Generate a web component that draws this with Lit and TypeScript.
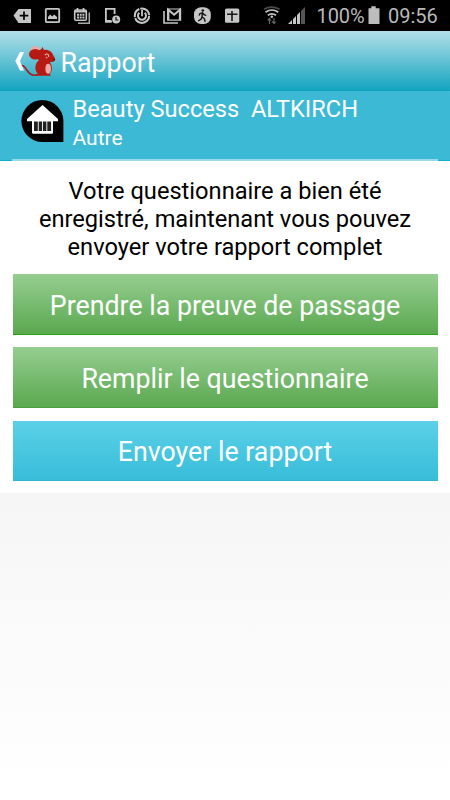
import { LitElement, html, css, svg } from "lit";
import { customElement, property } from "lit/decorators.js";

const notificationIcons = [
  svg`<path d="M6.5 15.5 11.5 9H24v14H11.5Z" fill="#c6c6c6"/><path d="M17 11.5v8.5M12.7 15.7h8.6" stroke="#000" stroke-width="1.7"/>`,
  svg`<rect x="8.8" y="8.8" width="13.4" height="13.4" rx="1" fill="none" stroke="#c6c6c6" stroke-width="1.8"/><path d="M11 19v-2l2.2-2.5 2 2 2-2L20 17v2Z" fill="#c6c6c6"/>`,
  svg`<rect x="7.7" y="10" width="11.6" height="10.3" rx="1.3" fill="none" stroke="#c6c6c6" stroke-width="1.6"/><path d="M8 11.5h11M10.5 8v3M16.5 8v3" stroke="#c6c6c6" stroke-width="1.8"/><path d="M10 14.8h7.5M10 17.5h7.5" stroke="#c6c6c6" stroke-width="2" stroke-dasharray="2 .7"/><path d="M22.3 12.5v10.7H11" fill="none" stroke="#a8a8a8" stroke-width="1.5"/>`,
  svg`<path d="M17.6 14V8.8H8.9V21.5H15" fill="none" stroke="#c6c6c6" stroke-width="1.8"/><path d="M8 20h6v2.5H8Z" fill="#c6c6c6"/><circle cx="19.2" cy="19.6" r="4" fill="#c6c6c6"/><path d="M19 17v3h2.3" fill="none" stroke="#111" stroke-width="1.2"/>`,
  svg`<circle cx="15" cy="15.7" r="7.2" fill="none" stroke="#c6c6c6" stroke-width="2" stroke-dasharray="20 1 10 1 12.2 1"/><path d="M12.3 12.7a4 4 0 1 0 5.4 0" fill="none" stroke="#c6c6c6" stroke-width="2"/><path d="M15 10v6.3" stroke="#c6c6c6" stroke-width="1.8"/>`,
  svg`<path d="M7 11v12h14" fill="none" stroke="#c6c6c6" stroke-width="1.6"/><path d="M10.6 20.2V9H23.6v11.2Z" fill="none" stroke="#c6c6c6" stroke-width="1.2"/><path d="M11.3 20V9.7l5.8 5 5.8-5V20" fill="none" stroke="#c6c6c6" stroke-width="2.1"/>`,
  svg`<rect x="7" y="7.2" width="16.8" height="16.8" rx="7" fill="#c6c6c6"/><circle cx="15.8" cy="10.5" r="1.3" fill="#111"/><path d="M15.5 12.5 15 16.8l2.4 2 .8 3M15 16.8l-.8 2.2-3 2M12 15.5l1-2 2.5-.8 1.8 2.1 2 .6" fill="none" stroke="#111" stroke-width="1.4"/>`,
  svg`<rect x="8" y="8.5" width="14.3" height="14.3" rx="1.6" fill="#c6c6c6"/><path d="M15 11v10M10 14.3h10.5" stroke="#161616" stroke-width="1.6"/>`,
];

@customElement("status-bar")
export class StatusBar extends LitElement {
  static styles = css`
    :host {
      display: flex;
      height: 31px;
      padding-left: 7px;
      background: #000;
      color: #b9b9b9;
      font: 20px/33px Roboto, sans-serif;
    }
    svg { display: block; flex: none; }
    .radio { margin-left: 14px; }
    .level { width: 49px; margin-left: 7.5px; letter-spacing: -0.1px; white-space: nowrap; }
    .battery { margin-left: 2.5px; }
    .clock { margin-left: 8px; }
  `;

  render() {
    return html`
      ${notificationIcons.map(
        (icon) => html`<svg width="30" height="31" viewBox="0 0 30 31">${icon}</svg>`
      )}
      <svg class="radio" width="48" height="31" viewBox="261 0 48 31">
        <g fill="none" stroke-width="1.7">
          <path d="M264 9.3q7.500-4.500 15.500 0" stroke="#4b4b4b" />
          <path d="M265.500 12.300q6.300-4.600 12.800 0M267.800 15.300q4-3 8.200 0" stroke="#c6c6c6" />
          <path d="M269.500 24v-5.500m-1.700 2 1.700-2 1.500 2M274 18v5.500m-1.700-2 1.700 2 1.600-2" stroke="#666" stroke-width="1.200" />
        </g>
        <circle cx="271.800" cy="16.800" r="1.300" fill="#c6c6c6" />
        <path d="M288 24l4-4v4Z M293 19l3-3v8h-3Z M297 15l3-3v12h-3Z" fill="#c6c6c6" />
        <path d="M301 11l4-4v17h-4Z" fill="#555" />
      </svg>
      <span class="level">100%</span>
      <svg class="battery" width="12" height="31" viewBox="0 0 12 31">
        <path d="M.5 8.200h2.800V6.200h4.400v2H11.500V24H.5Z" fill="#bdbdbd" />
      </svg>
      <span class="clock">09:56</span>
    `;
  }
}

@customElement("action-button")
export class ActionButton extends LitElement {
  @property() label = "";
  @property({ reflect: true }) tone = "green";

  static styles = css`
    :host { display: block; }
    .button {
      display: block;
      box-sizing: border-box;
      width: 100%;
      height: 61px;
      padding: 4px 0 0;
      border: 0;
      border-bottom: 1px solid #4a9f41;
      background: linear-gradient(#95ce90, #5ba850);
      color: #fff;
      font: 26.75px/30px Roboto, sans-serif;
      text-align: center;
    }
    :host([tone="bright"]) .button { border-bottom-color: #25a510; }
    :host([tone="blue"]) .button {
      height: 60px;
      border-bottom-color: #30b4d4;
      background: linear-gradient(#5bd0e8, #38bdd9);
    }
  `;

  render() {
    return html`<button class="button">${this.label}</button>`;
  }
}

@customElement("app-root")
export class AppRoot extends LitElement {
  static styles = css`
    :host {
      display: flex;
      flex-direction: column;
      height: 800px;
      background: linear-gradient(#f6f6f6 493px, #fff 790px);
      font-family: Roboto, sans-serif;
      overflow: hidden;
    }
    .title-bar {
      display: flex;
      height: 60px;
      background: linear-gradient(#b2dfe8, #12a4c0);
      color: #fff;
    }
    .title { font-size: 26.75px; line-height: 64px; white-space: nowrap; }
    .mouse { display: block; flex: none; margin-right: -0.5px; }
    .place {
      display: flex;
      box-sizing: border-box;
      height: 70px;
      background: linear-gradient(#3bb9d5 69px, #0fafcf 69px);
      color: #fff;
      padding: 0 12px;
      flex-wrap: wrap;
    }
    .logo { display: block; width: 61px; height: 68px; }
    .name { margin-left: -0.5px; font-size: 23.65px; line-height: 32px; padding-top: 2px; white-space: pre; }
    .kind { margin-left: -0.5px; font-size: 21px; line-height: 26px; }
    .rule { width: 100%; height: 2px; background: #9ad9e7; }
    .content {
      box-sizing: border-box;
      height: 332px;
      padding: 16px 12.500px 0;
      background: #fff;
    }
    .message { margin: 0 0 13px; font-size: 23.65px; line-height: 28px; text-align: center; color: #000; white-space: nowrap; }
    .actions { display: flex; flex-direction: column; gap: 12.400px; }
  `;

  render() {
    return html`
      <status-bar></status-bar>
      <header class="title-bar">
        <svg class="mouse" width="61" height="60" viewBox="0 31 61 60">
          <path d="M20 52h4l-4 9 4 9.500h-4l-4.700-9.500Z" fill="#fff" />
          <path d="M22.500 65.500C27 67 27 75 34 75.200q4 .2 8-2.500" fill="none" stroke="#a51d1d" stroke-width="1.600" stroke-linecap="round" />
          <ellipse cx="35.300" cy="49.600" rx="4.800" ry="3.500" fill="#ecaaa4" />
          <ellipse cx="35.300" cy="54.300" rx="6.300" ry="5.300" fill="#b51b12" />
          <path d="M38 51q1.500-1.500 3-1.500L42.700 47l1 2.700c4-.4 7 .8 8.500 3.600L54.800 58q1.200 3.300-2.500 4h-4.800L41 63l-4-5Z" fill="#b51b12" />
          <path d="M38.500 60.500c-4 4-4 10-.8 13L36 75.800h15l-1.300-1.600c3.300-3.500 2.800-9.500-.7-13.200Z" fill="#b51b12" />
          <ellipse cx="48.200" cy="68.800" rx="2.800" ry="5" fill="#ecaaa4" />
          <path d="M44.800 55.200q1.500-2.200 3.500-.6l.5 2.200M45.800 57.300l1.600.7" fill="none" stroke="#f3b2a9" stroke-width="1.100" />
          <circle cx="54.200" cy="59.600" r="1" fill="#6d1718" />
        </svg>
        <span class="title">Rapport</span>
      </header>
      <section class="place">
        <svg class="logo" width="61" height="68" viewBox="12 91 61 68">
          <path d="M42.400 100a21 21 0 0 1 21 21v21h-21a21 21 0 0 1 0-42Z" fill="#000" />
          <path d="M42.500 105 58 119v2.200H53V132.600q0 1.200-1.200 1.200H33.200Q32 133.800 32 132.600V121.200H27V119Z" fill="#fff" />
          <path d="M34 121.500h3.800v9.500H34ZM38.700 121.500h3.400v9.500h-3.400ZM43 121.500h3.400v9.500H43ZM47.300 121.500h3.800v9.500h-3.800Z" fill="#222" />
        </svg>
        <div>
          <div class="name">Beauty Success  ALTKIRCH</div>
          <div class="kind">Autre</div>
        </div>
        <div class="rule"></div>
      </section>
      <main class="content">
        <p class="message">Votre questionnaire a bien été<br />enregistré, maintenant vous pouvez<br />envoyer votre rapport complet</p>
        <div class="actions">
          <action-button tone="bright" label="Prendre la preuve de passage"></action-button>
          <action-button label="Remplir le questionnaire"></action-button>
          <action-button tone="blue" label="Envoyer le rapport"></action-button>
        </div>
      </main>
    `;
  }
}
